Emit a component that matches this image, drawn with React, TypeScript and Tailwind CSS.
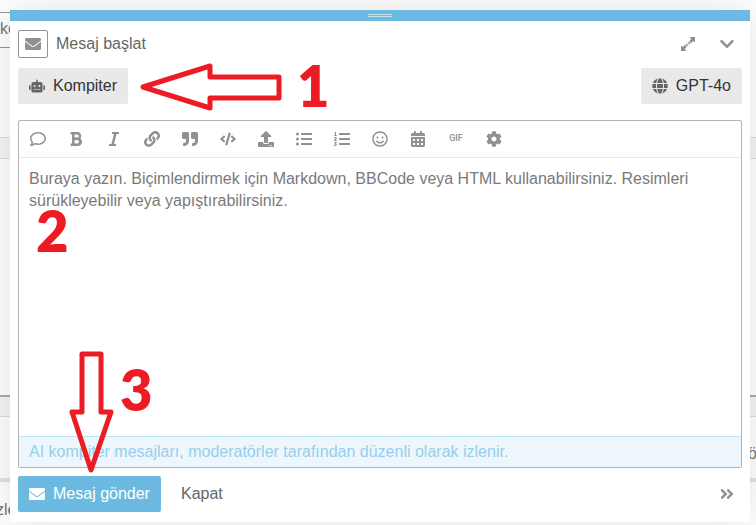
import { ReactNode } from 'react'
import {
  FaAngleDoubleRight,
  FaBold,
  FaCalendarAlt,
  FaChevronDown,
  FaCode,
  FaCog,
  FaEnvelope,
  FaGlobe,
  FaItalic,
  FaLink,
  FaListOl,
  FaListUl,
  FaQuoteRight,
  FaRegComment,
  FaRegSmile,
  FaRobot,
  FaUpload,
} from 'react-icons/fa'

const TOOLS: { id: string; icon: ReactNode }[] = [
  { id: 'Comment', icon: <FaRegComment /> },
  { id: 'Bold', icon: <FaBold /> },
  { id: 'Italic', icon: <FaItalic /> },
  { id: 'Link', icon: <FaLink /> },
  { id: 'Quote', icon: <FaQuoteRight /> },
  { id: 'Code', icon: <FaCode /> },
  { id: 'Upload', icon: <FaUpload /> },
  { id: 'Bulleted list', icon: <FaListUl /> },
  { id: 'Numbered list', icon: <FaListOl /> },
  { id: 'Emoji', icon: <FaRegSmile /> },
  { id: 'Date', icon: <FaCalendarAlt /> },
  { id: 'GIF', icon: <span className="font-[Roboto,sans-serif] text-[9px] font-medium">GIF</span> },
  { id: 'Settings', icon: <FaCog /> },
]

function ExpandIcon() {
  return (
    <svg viewBox="0 0 14 14" className="size-3.5" fill="currentColor">
      <path d="M8.5 0H14v5.500l-1.700-1.500-2.300 2.300-2-2 2.300-2.300z" />
      <path d="M5.500 14H0V8.500l1.700 1.500 2.300-2.300 2 2-2.300 2.300z" />
      <path d="M7.500 4.700 9.300 6.500 8.300 7.500 6.500 5.700z" />
      <path d="M5.700 6.500 7.500 8.300 6.500 9.300 4.700 7.500z" />
    </svg>
  )
}

// The forum page that shows around the edges of the composer
function Backdrop() {
  return (
    <div className="absolute inset-0 -z-10 flex flex-col overflow-hidden bg-white text-[#777]" aria-hidden="true">
      <div className="mt-3 h-9 w-16 border border-l-0 border-[#999] leading-8">ko</div>
      <div className="mt-[89px] h-[22px] border-y border-[#dedede] bg-[#f5f5f5]" />
      <div className="h-[236px]" />
      <div className="h-[22px] border-t-2 border-b border-t-[#aaa] border-b-[#dedede] bg-[#f5f5f5]" />
      <div className="flex h-[61px] items-center justify-end pt-3 pr-1">
        <span className="w-1 overflow-visible">ö</span>
      </div>
      <div className="h-1 bg-[#e2e2e2]" />
      <div className="-ml-1 pt-4">zle</div>
    </div>
  )
}

function Toolbar() {
  return (
    <div className="flex h-[37px] border-b border-[#e9e9e9] text-[#919191]">
      {TOOLS.map((tool) => (
        <button key={tool.id} aria-label={tool.id} className="flex w-[38px] items-center justify-center">
          {tool.icon}
        </button>
      ))}
    </div>
  )
}

function Annotations() {
  return (
    <div className="pointer-events-none absolute inset-0 font-[Lato,sans-serif] text-[56px] leading-none font-extrabold text-[#ed1c24]">
      <svg className="absolute top-0 left-0 h-[525px] w-[300px]" fill="none" stroke="currentColor" strokeWidth="5">
        <path d="M143 87 210 66V77H279V98H210V108Z" strokeLinejoin="round" />
        <path d="M82 354H101V412H111L91 470 72 412H82Z" strokeLinejoin="round" />
      </svg>
      <span className="absolute top-[58px] left-[297px]">1</span>
      <span className="absolute top-[203px] left-[36px]">2</span>
      <span className="absolute top-[362px] left-[120px]">3</span>
    </div>
  )
}

export default function App() {
  return (
    <div className="relative isolate flex min-h-screen flex-col pt-2.5 pr-1.5 pb-[3px] pl-2.5 font-['Liberation_Sans',Arial,sans-serif] text-base text-[#666]">
      <Backdrop />
      <main className="flex flex-1 flex-col bg-white shadow-[0_0_40px_rgba(0,0,0,0.12)]">
        <div className="flex h-[11px] flex-col items-center justify-center gap-px bg-[#6cbae2]">
          <div className="h-px w-6 bg-[#c4e3f3]" />
          <div className="h-px w-6 bg-[#c4e3f3]" />
        </div>

        <div className="flex flex-1 flex-col px-2 pt-[9px] pb-2.5">
          <header className="flex h-7 items-center">
            <button aria-label="Mesaj" className="flex h-7 w-[30px] items-center justify-center rounded-xs border border-[#919191] text-[#919191]">
              <FaEnvelope />
            </button>
            <h1 className="ml-2 flex-1">Mesaj başlat</h1>
            <div className="flex items-center gap-6 pr-[7px] text-[#919191]">
              <button aria-label="Expand">
                <ExpandIcon />
              </button>
              <button aria-label="Minimize">
                <FaChevronDown />
              </button>
            </div>
          </header>

          <div className="mt-2.5 flex justify-between text-[#333]">
            <button className="flex h-9 items-center gap-2 rounded-xs bg-[#e9e9e9] px-[11px]">
              <FaRobot className="text-[#666]" />
              Kompiter
            </button>
            <button className="flex h-9 items-center gap-2 rounded-xs bg-[#e9e9e9] px-[11px]">
              <FaGlobe className="text-[#666]" />
              GPT-4o
            </button>
          </div>

          <div className="mt-4 flex flex-1 flex-col rounded-xs border border-[#b4b4b4]">
            <Toolbar />
            <textarea
              aria-label="Mesaj"
              className="w-full flex-1 resize-none px-2.5 pt-2.5 leading-[22px] outline-none placeholder:text-[#7a7a7a]"
              placeholder="Buraya yazın. Biçimlendirmek için Markdown, BBCode veya HTML kullanabilirsiniz. Resimleri sürükleyebilir veya yapıştırabilirsiniz."
            />
            <p className="flex h-[31px] items-center border-t border-[#bfe2f4] bg-[#eef6fd] px-2.5 text-[#96cfec]">
              AI kompiter mesajları, moderatörler tarafından düzenli olarak izlenir.
            </p>
          </div>

          <footer className="mt-2 flex items-center">
            <button className="flex h-9 items-center gap-2 rounded-xs bg-[#6cbae2] px-[11px] text-white">
              <FaEnvelope />
              Mesaj gönder
            </button>
            <button className="ml-5">Kapat</button>
            <button aria-label="Panel" className="mr-[7px] ml-auto text-[#919191]">
              <FaAngleDoubleRight />
            </button>
          </footer>
        </div>
      </main>
      <Annotations />
    </div>
  )
}
